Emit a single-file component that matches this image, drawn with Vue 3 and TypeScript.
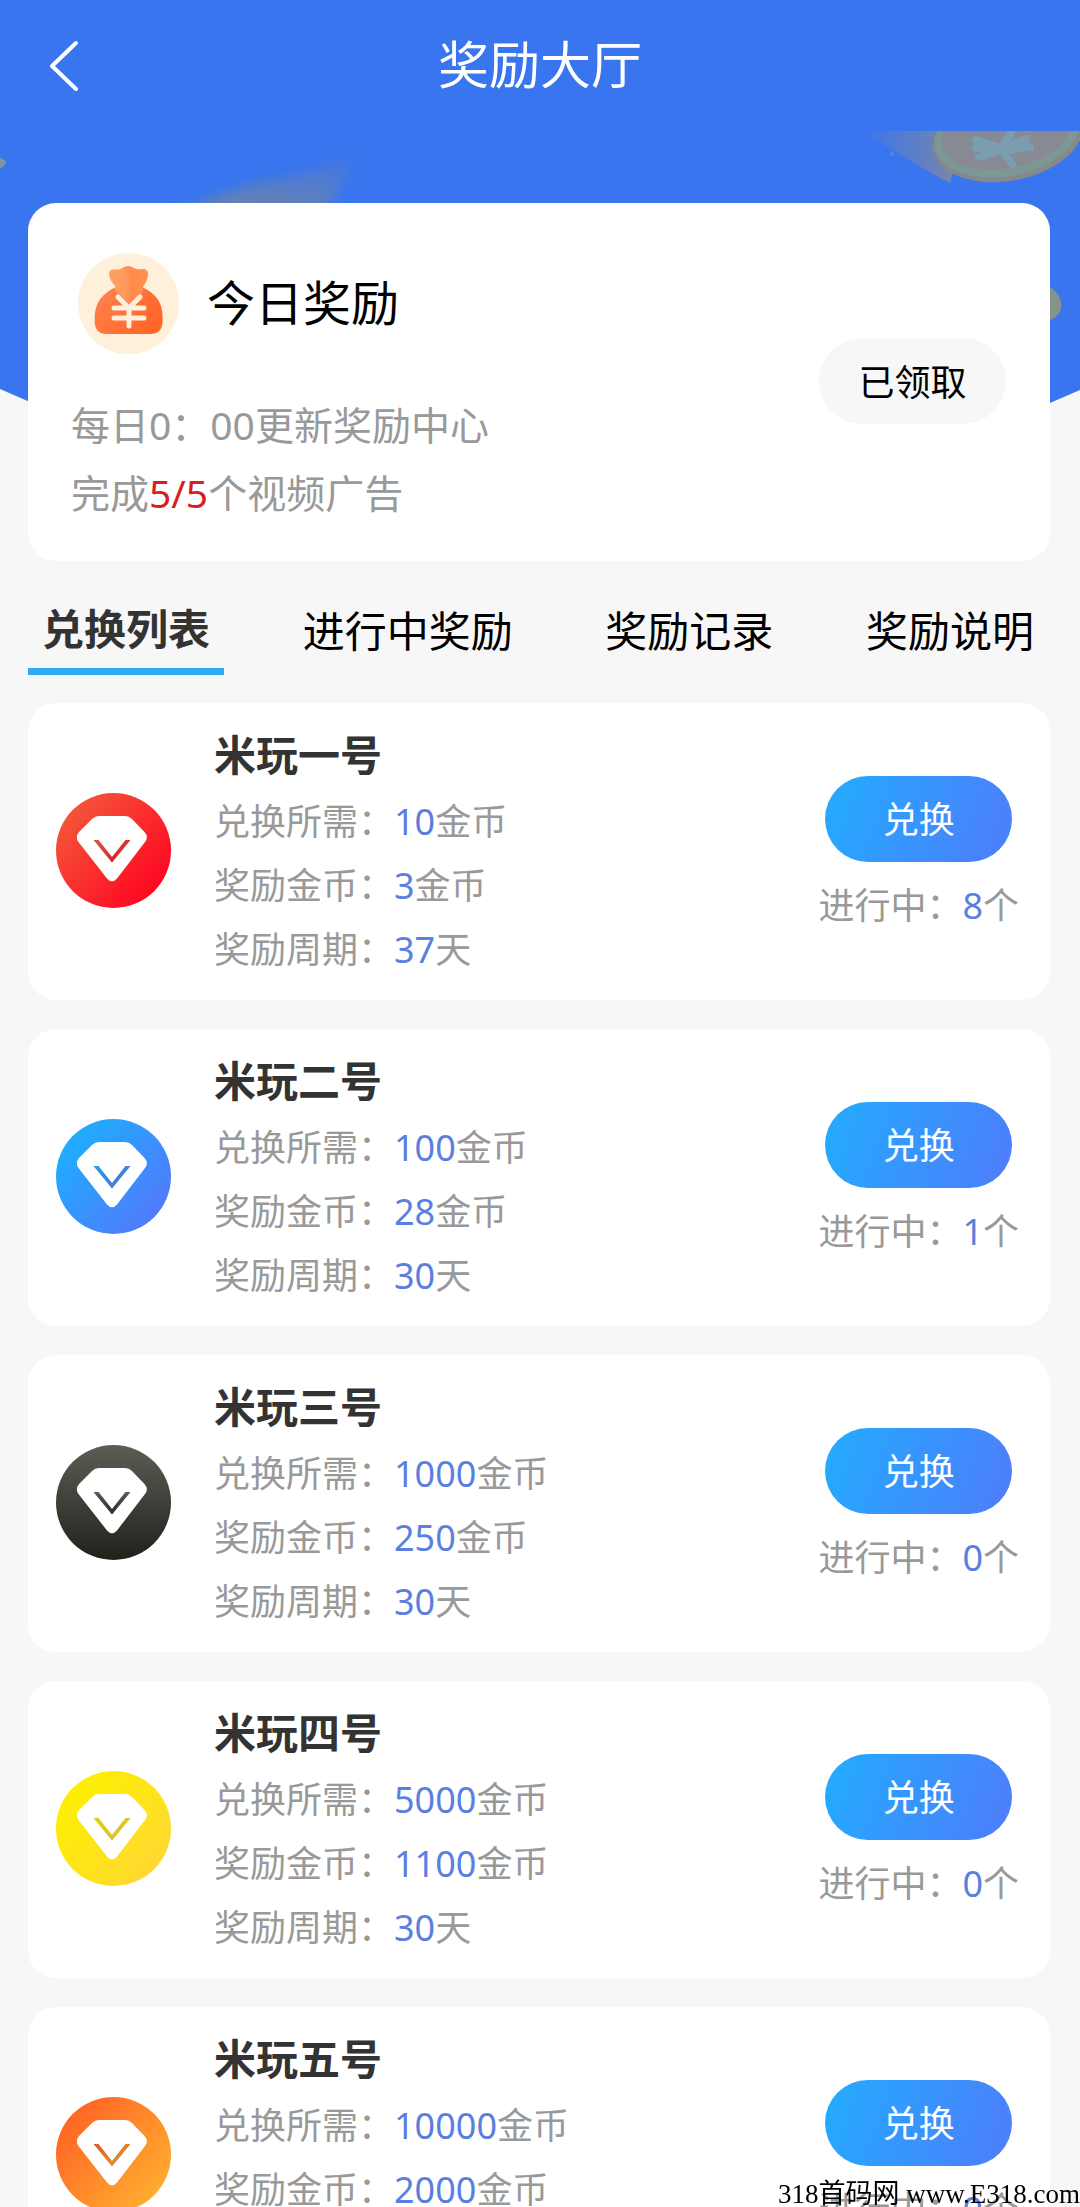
<script setup lang="ts">
import { ref } from 'vue'

interface Reward {
  name: string
  cost: number
  gain: number
  days: number
  running: number
  from: string
  to: string
  vertical?: boolean
}

const tabs: string[] = ['兑换列表', '进行中奖励', '奖励记录', '奖励说明']
const current = ref(0)

const rewards: Reward[] = [
  { name: '米玩一号', cost: 10, gain: 3, days: 37, running: 8, from: '#f5553a', to: '#fe0520' },
  { name: '米玩二号', cost: 100, gain: 28, days: 30, running: 1, from: '#1eaeff', to: '#5279fb' },
  { name: '米玩三号', cost: 1000, gain: 250, days: 30, running: 0, from: '#5d5d55', to: '#20211c', vertical: true },
  { name: '米玩四号', cost: 5000, gain: 1100, days: 30, running: 0, from: '#fdf000', to: '#ffd832' },
  { name: '米玩五号', cost: 10000, gain: 2000, days: 30, running: 0, from: '#ff6424', to: '#ffae30' },
]
</script>

<template>
  <div class="app">
    <header class="bar">
      <button class="back" type="button" aria-label="返回">
        <svg viewBox="0 0 32 54" width="32" height="54" aria-hidden="true">
          <path d="M28 4 L4 27 L28 50" fill="none" stroke="#fff" stroke-width="4" stroke-linecap="round" stroke-linejoin="round" />
        </svg>
      </button>
      <h1>奖励大厅</h1>
    </header>

    <main class="content">
      <svg class="backdrop" viewBox="0 0 1080 360" aria-hidden="true">
        <defs>
          <linearGradient id="trail" x1="0" y1="0" x2="1" y2="0">
            <stop offset="0" stop-color="#8088a0" stop-opacity="0" />
            <stop offset="1" stop-color="#8b8a95" stop-opacity="0.9" />
          </linearGradient>
          <linearGradient id="smear" x1="0.7" y1="0" x2="0.3" y2="1">
            <stop offset="0" stop-color="#7585a8" stop-opacity="0.2" />
            <stop offset="1" stop-color="#6f849f" stop-opacity="0.9" />
          </linearGradient>
          <filter id="soft" x="-20%" y="-20%" width="140%" height="140%">
            <feGaussianBlur stdDeviation="6" />
          </filter>
        </defs>
        <path d="M0 0 H1080 V259 Q540 500 0 258 Z" fill="#3875ee" />
        <path d="M-6 24 L5 29 Q7 32 4 35 L-6 42 Z" fill="#7f93a0" />
        <path d="M180 84 Q235 52 290 46 Q330 34 352 26 Q346 52 322 84 Z" fill="url(#smear)" filter="url(#soft)" />
        <path d="M862 0 H965 L950 52 Q915 34 862 0 Z" fill="url(#trail)" />
        <circle cx="892" cy="23" r="2" fill="#5f84d8" />
        <g transform="rotate(-11 1007 4)">
          <ellipse cx="1008" cy="5" rx="76" ry="45" fill="#85898a" />
          <ellipse cx="1007" cy="3" rx="73" ry="42" fill="#7d9795" />
          <ellipse cx="1007" cy="1" rx="66" ry="36" fill="#878993" />
        </g>
        <path d="M976 9 L1001 17 M979 26 L1001 19 M976 17 L998 18 M1030 16 L1003 20 M1026 8 L1003 17 M1001 18 L1012 33 M1001 18 L1012 0" fill="none" stroke="#7a9db0" stroke-width="8" stroke-linecap="round" />
        <ellipse cx="1043" cy="172" rx="19" ry="17" transform="rotate(35 1043 172)" fill="#84938c" />
      </svg>

      <section class="today">
        <div class="today-info">
          <div class="today-head">
            <svg viewBox="0 0 101 101" width="101" height="101" aria-hidden="true">
              <defs>
                <linearGradient id="bag" x1="0" y1="0" x2="1" y2="0.6">
                  <stop offset="0" stop-color="#ff8450" />
                  <stop offset="1" stop-color="#ff6628" />
                </linearGradient>
                <linearGradient id="neck" x1="0" y1="0" x2="1" y2="0">
                  <stop offset="0" stop-color="#ffa068" />
                  <stop offset="0.4" stop-color="#ff9a5c" />
                  <stop offset="0.6" stop-color="#ff8b4a" />
                  <stop offset="1" stop-color="#ff9252" />
                </linearGradient>
              </defs>
              <circle cx="50.5" cy="50.5" r="50.5" fill="#fff0dc" />
              <path d="M38 34 H64 Q84 43 84.500 62 V69 Q84 81 72 81 H29 Q17 81 16.700 69 V62 Q18 43 38 34 Z" fill="url(#bag)" />
              <path d="M38 34 Q31 27 31 21 Q31 16 36 16.500 Q42 17 44 15 Q50 11 56 15 Q59 17 65 16 Q70 16 70 21 Q70 27 65 34 Q67 38 60 44 L52 51 L36 36 Z" fill="url(#neck)" />
              <path d="M40 44 L51 55 L62 44 M36 55 H66 M36 65 H66 M51 55 V73" fill="none" stroke="#fff0dc" stroke-width="5" stroke-linecap="round" stroke-linejoin="round" />
            </svg>
            <h2>今日奖励</h2>
          </div>
          <p>每日0：00更新奖励中心</p>
          <p>完成<em>5/5</em>个视频广告</p>
        </div>
        <button class="pill claimed" type="button">已领取</button>
      </section>

      <nav class="tabs">
        <button
          v-for="(tab, i) in tabs"
          :key="tab"
          type="button"
          :class="['tab', { active: current === i }]"
          @click="current = i"
        >{{ tab }}</button>
      </nav>

      <ul class="list">
        <li v-for="(r, i) in rewards" :key="r.name" class="reward">
          <svg class="gem" viewBox="0 0 115 115" width="115" height="115" aria-hidden="true">
            <defs>
              <linearGradient :id="'gem' + i" :x1="r.vertical ? 0.5 : 0.1" :y1="r.vertical ? 0 : 0.15" :x2="r.vertical ? 0.5 : 0.9" :y2="r.vertical ? 1 : 0.85">
                <stop offset="0" :stop-color="r.from" />
                <stop offset="1" :stop-color="r.to" />
              </linearGradient>
            </defs>
            <circle cx="57.5" cy="57.5" r="57.5" :fill="`url(#gem${i})`" />
            <path d="M43 23 H69 Q73 23 76 26 L88.500 39 Q93 44 89 49 L61 85.500 Q56 91 51 85.500 L22.500 49 Q19 44 23 39 L36 26 Q39 23 43 23 Z" fill="#fff" />
            <path d="M37.500 47 H42.500 L56 64 L69.500 47 H74.500 L56 69.500 Z" :fill="`url(#gem${i})`" />
            <path d="M37.500 47 H42.500 L56 64 L69.500 47 H74.500 L56 69.500 Z" fill="#555" fill-opacity="0.2" />
          </svg>
          <div class="detail">
            <h3>{{ r.name }}</h3>
            <p>兑换所需：<b>{{ r.cost }}</b>金币</p>
            <p>奖励金币：<b>{{ r.gain }}</b>金币</p>
            <p>奖励周期：<b>{{ r.days }}</b>天</p>
          </div>
          <div class="action">
            <button class="pill exchange" type="button">兑换</button>
            <p>进行中：<b>{{ r.running }}</b>个</p>
          </div>
        </li>
      </ul>
    </main>

    <div class="watermark">318首码网 www.E318.com</div>
  </div>
</template>

<style>
body {
  margin: 0;
  background: #f7f7f7;
}
</style>

<style scoped>
.app {
  display: flex;
  flex-direction: column;
  height: 100vh;
  overflow: hidden;
  background: #f7f7f7;
  font-family: "Noto Sans", "Noto Sans CJK SC", sans-serif;
  color: #000;
}

h1,
h2,
h3,
p,
ul {
  margin: 0;
  padding: 0;
}

button {
  border: 0;
  padding: 0;
  background: none;
  color: inherit;
  font-family: inherit;
  cursor: pointer;
}

.bar {
  display: grid;
  grid-template-columns: 80px 1fr 80px;
  align-items: center;
  flex: none;
  height: 131px;
  background: #3875ee;
  color: #fff;
}

.back {
  display: flex;
  justify-content: flex-end;
}

.bar h1 {
  padding-bottom: 4px;
  font-size: 51px;
  line-height: 68px;
  font-weight: 400;
  text-align: center;
}

.content {
  position: relative;
  flex: 1;
  min-height: 0;
  padding: 72px 30px 0 28px;
  overflow-y: auto;
  scrollbar-width: none;
}

.backdrop {
  position: absolute;
  top: 0;
  left: 0;
  width: 100%;
  overflow: hidden;
}

.today {
  position: relative;
  display: flex;
  align-items: center;
  justify-content: space-between;
  padding: 32px 44px 34px 43px;
  border-radius: 28px;
  background: #fff;
}

.today-info {
  padding-top: 18px;
}

.today-head {
  display: flex;
  align-items: center;
  gap: 28px;
  margin-bottom: 37px;
  padding-left: 7px;
}

.today-head h2 {
  padding-bottom: 2px;
  font-size: 48px;
  line-height: 68px;
  font-weight: 400;
}

.today-info p {
  color: #999;
  font-size: 39px;
  line-height: 68px;
}

.today-info em {
  color: #d81e1e;
  font-style: normal;
}

.pill {
  width: 187px;
  height: 86px;
  padding-bottom: 2px;
  border-radius: 43px;
  font-size: 36px;
}

.claimed {
  background: #f7f7f7;
}

.exchange {
  background: linear-gradient(110deg, #22acff, #4f7cfb);
  color: #fff;
}

.tabs {
  display: flex;
  align-items: flex-start;
  justify-content: space-between;
  margin: 37px 2px 28px 0;
}

.tab {
  padding: 0 14px;
  font-size: 42px;
  line-height: 66px;
}

.tab.active {
  padding-bottom: 8px;
  border-bottom: 7px solid #2faaf4;
  color: #333;
  font-weight: 700;
  line-height: 62px;
}

.list {
  display: flex;
  flex-direction: column;
  gap: 29px;
  list-style: none;
}

.reward {
  display: flex;
  align-items: center;
  padding: 20px 31px 18px 28px;
  border-radius: 28px;
  background: #fff;
}

.gem {
  flex: none;
  margin: 0 43px 4px 0;
}

.detail {
  flex: 1;
}

.detail h3 {
  margin-bottom: 3px;
  color: #333;
  font-size: 42px;
  line-height: 64px;
}

.reward p {
  color: #999;
  font-size: 36px;
  line-height: 64px;
}

.reward b {
  color: #5b7fe0;
  font-weight: 400;
}

.action {
  display: flex;
  flex-direction: column;
  align-items: center;
  gap: 12px;
  padding-top: 8px;
}

.watermark {
  position: fixed;
  right: 0;
  bottom: 0;
  color: #000;
  font-family: "Liberation Serif", "Noto Sans CJK SC", serif;
  font-size: 27px;
  line-height: 26px;
  white-space: nowrap;
}
</style>
